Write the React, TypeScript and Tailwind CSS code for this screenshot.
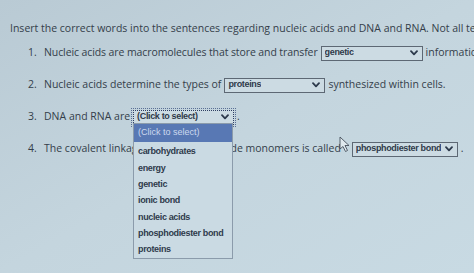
import React from "react";

const Chevron = () => (
  <svg width="8" height="6" viewBox="0 0 8 6" className="shrink-0">
    <path d="M1 1.2 L4 4.4 L7 1.2" fill="none" stroke="#2d3a4c" strokeWidth="1.8" strokeLinecap="round" strokeLinejoin="round" />
  </svg>
);

function Select({ value, w, dotted }: { value: string; w: string; dotted?: boolean }) {
  return (
    <span
      className={
        "shrink-0 inline-flex items-center justify-between h-[15px] pl-[3px] pr-[4px] mx-[3px] bg-[#ccdbe3] font-['Liberation_Sans',sans-serif] font-bold text-[9px] tracking-[-0.35px] text-[#2f3a4a] whitespace-nowrap " +
        w +
        (dotted ? " border border-dotted border-[#2f3f62] outline outline-1 outline-dotted outline-offset-1 outline-[#5a6f95]" : " border border-[#5d6874]")
      }
    >
      <span className="overflow-hidden">{value}</span>
      <Chevron />
    </span>
  );
}

const options = [
  "carbohydrates",
  "energy",
  "genetic",
  "ionic bond",
  "nucleic acids",
  "phosphodiester bond",
  "proteins",
];

export default function App() {
  return (
    <div className="relative w-[474px] h-[273px] overflow-hidden bg-gradient-to-br from-[#b9cad4] via-[#c4d5de] to-[#c8dae3] font-['Open_Sans',sans-serif] text-[10.5px] text-[#343e4a]">
      <p className="pl-[10px] pt-[20px] whitespace-nowrap leading-[16px]">
        Insert the correct words into the sentences regarding nucleic acids and DNA and RNA. Not all terms will be used.
      </p>
      <ol className="mt-[1px]">
        <li className="flex items-center h-[32px] whitespace-nowrap">
          <span className="shrink-0 w-[44px] pl-[28px]">1.</span>
          <span className="tracking-[-0.1px]">Nucleic acids are macromolecules that store and transfer</span>
          <Select value="genetic" w="w-[102px]" />
          <span>information.</span>
        </li>
        <li className="flex items-center h-[32px] whitespace-nowrap">
          <span className="shrink-0 w-[44px] pl-[28px]">2.</span>
          <span>Nucleic acids determine the types of</span>
          <Select value="proteins" w="w-[101px]" />
          <span>synthesized within cells.</span>
        </li>
        <li className="flex items-center h-[32px] whitespace-nowrap">
          <span className="shrink-0 w-[44px] pl-[28px]">3.</span>
          <span>DNA and RNA are</span>
          <Select value="(Click to select)" w="w-[101px]" dotted />
          <span>.</span>
        </li>
        <li className="flex items-center h-[32px] whitespace-nowrap">
          <span className="shrink-0 w-[44px] pl-[28px]">4.</span>
          <span>The covalent linkage between nucleotide monomers is called</span>
          <span className="relative inline-block w-[0px] shrink-0">
            <svg width="12" height="17" viewBox="0 0 12 17" className="absolute left-[-2px] top-[-13px]">
              <path d="M1 1 L1 13 L4 10.5 L6.5 15.5 L8.5 14.5 L6 9.5 L10 9.5 Z" fill="#dfe9ee" stroke="#46505c" strokeWidth="0.9" strokeLinejoin="round" />
            </svg>
          </span>
          <span className="ml-[8px] flex">
            <Select value="phosphodiester bond" w="w-[106px]" />
          </span>
          <span>.</span>
        </li>
      </ol>

      <div className="absolute left-[133px] top-[123px] w-[100px] border border-[#8b9bab] bg-[#cadae3] font-['Liberation_Sans',sans-serif] font-bold text-[9px] tracking-[-0.35px] text-[#2f3a4c] whitespace-nowrap">
        <div className="h-[18px] flex items-center pl-[4px] bg-[#5878b4] text-[#cdd8ee] font-normal tracking-normal">(Click to select)</div>
        <div className="pt-[2px]">
          {options.map((o) => (
            <div key={o} className="h-[16.3px] flex items-center pl-[4px]">
              {o}
            </div>
          ))}
        </div>
      </div>
    </div>
  );
}
